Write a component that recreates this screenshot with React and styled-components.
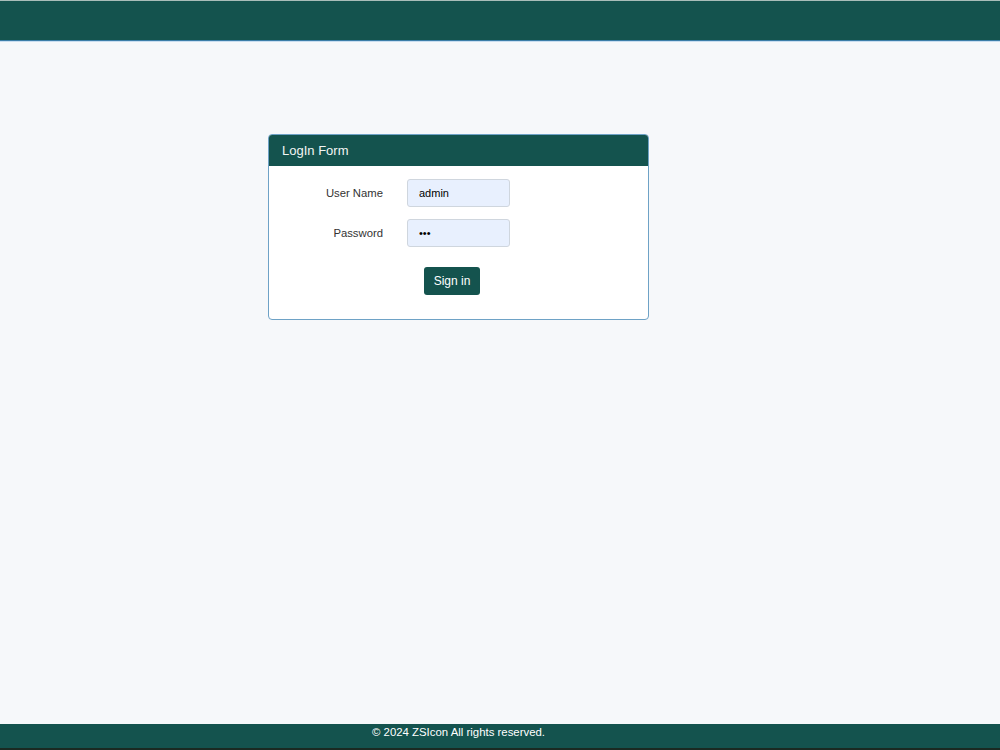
import React, { useState } from 'react';
import styled, { createGlobalStyle } from 'styled-components';

const GlobalStyle = createGlobalStyle`
  html, body {
    margin: 0;
    padding: 0;
    height: 100%;
  }
  body {
    font-family: "Liberation Sans", Arial, sans-serif;
    background-color: #f6f8fa;
  }
  #root {
    height: 100%;
  }
`;

const App = () => {
  const [user, setUser] = useState('admin');
  const [pass, setPass] = useState('123');

  return (
    <>
      <GlobalStyle />
      <StyledPage>
        <StyledTopBar />
        <StyledMain>
          <StyledCard>
            <StyledCardHeader>LogIn Form</StyledCardHeader>
            <StyledCardBody>
              <StyledRow>
                <StyledLabel htmlFor="user">User Name</StyledLabel>
                <StyledInput id="user" value={user} onChange={(e) => setUser(e.target.value)} />
              </StyledRow>
              <StyledRow>
                <StyledLabel htmlFor="pass">Password</StyledLabel>
                <StyledInput id="pass" type="password" value={pass} onChange={(e) => setPass(e.target.value)} />
              </StyledRow>
              <StyledActions>
                <StyledButton type="button">Sign in</StyledButton>
              </StyledActions>
            </StyledCardBody>
          </StyledCard>
        </StyledMain>
        <StyledFooter>
          <StyledFooterText>© 2024 ZSIcon All rights reserved.</StyledFooterText>
        </StyledFooter>
      </StyledPage>
    </>
  );
};

const StyledPage = styled.div`
  display: flex;
  flex-direction: column;
  height: 750px;
  overflow: hidden;
`;

const StyledTopBar = styled.header`
  flex: 0 0 auto;
  height: 39px;
  background-color: #14534e;
  border-top: 1px solid #a9bdb9;
  border-bottom: 1px solid #3c7ea8;
  box-shadow: 0 1px 0 #c9def0;
`;

const StyledMain = styled.main`
  flex: 1;
  width: 917px;
  padding-top: 93px;
  display: flex;
  justify-content: center;
  align-items: flex-start;
`;

const StyledCard = styled.div`
  width: 379px;
  background-color: #fff;
  border: 1px solid #6ea2c6;
  border-radius: 4px;
  overflow: hidden;
`;

const StyledCardHeader = styled.div`
  height: 31px;
  line-height: 31px;
  padding-left: 13px;
  background-color: #14534e;
  color: #f2f5f4;
  font-size: 13px;
`;

const StyledCardBody = styled.div`
  padding: 13px 0 24px;
  display: flex;
  flex-direction: column;
  gap: 12px;
`;

const StyledRow = styled.div`
  display: grid;
  grid-template-columns: 114px 103px;
  column-gap: 24px;
  align-items: center;
`;

const StyledLabel = styled.label`
  text-align: right;
  font-size: 11.3px;
  color: #333;
`;

const StyledInput = styled.input`
  box-sizing: border-box;
  width: 103px;
  height: 28px;
  padding: 0 11px;
  border: 1px solid #cfd6de;
  border-radius: 3px;
  background-color: #e8f0fe;
  font-family: "Liberation Sans", Arial, sans-serif;
  font-size: 11px;
  color: #000;
  outline: none;
`;

const StyledActions = styled.div`
  display: flex;
  padding-left: 155px;
  padding-top: 8px;
`;

const StyledButton = styled.button`
  width: 56px;
  height: 28px;
  border: none;
  border-radius: 3px;
  background-color: #14534e;
  color: #fff;
  font-family: "Liberation Sans", Arial, sans-serif;
  font-size: 12px;
  cursor: pointer;
`;

const StyledFooter = styled.footer`
  flex: 0 0 auto;
  height: 24px;
  width: 100%;
  background-color: #14534e;
  border-bottom: 2px solid #1a2a22;
`;

const StyledFooterText = styled.div`
  width: 917px;
  text-align: center;
  line-height: 17px;
  font-size: 11.4px;
  color: #fff;
`;

export default App;
